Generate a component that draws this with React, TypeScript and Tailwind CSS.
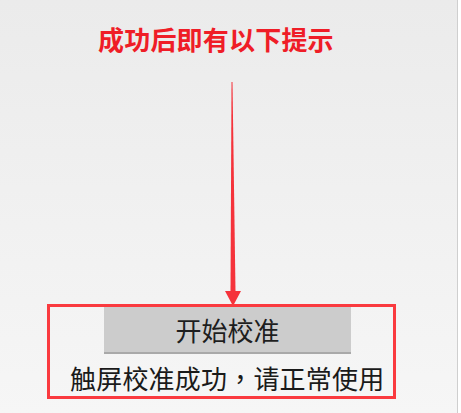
const CJK = "font-['Noto_Sans_CJK_SC','Noto_Sans',sans-serif]";

function DownArrow() {
  // red annotation arrow, tapering line + head
  return (
    <svg width="40" height="226" viewBox="0 0 40 226" className="block">
      <polygon points="11.5,2 12.5,2 15.5,212 10.5,212" fill="#f5333b" />
      <polygon points="5,211 21,211 13,226" fill="#f5333b" />
    </svg>
  );
}

export default function App() {
  return (
    <div className={`flex w-[461px] h-[413px] bg-white ${CJK}`}>
      <div className="flex flex-col w-[458px] h-full bg-gradient-to-b from-[#ebebeb] to-[#f6f6f6] border-r border-[#cfcfcf]">
        {/* Title */}
        <p className="mt-[25px] pl-[98px] text-[26px] leading-[28px] font-bold text-[#ef1d27] tracking-[0.2px]">
          成功后即有以下提示
        </p>

        {/* Arrow */}
        <div className="mt-[27px] pl-[220px]">
          <DownArrow />
        </div>

        {/* Result box */}
        <div className="-mt-[2px] ml-[47px] w-[349px] h-[95px] border-[3px] border-[#fa3a3f] flex flex-col">
          <div className="ml-[54px] w-[247px] h-[47px] bg-[#cccccc] border-b-2 border-[#a9a9a9] flex items-center justify-center text-[26px] leading-none text-[#1e1e1e]">
            开始校准
          </div>
          <p className="mt-[9px] pl-[20px] text-[26px] leading-[30px] text-[#1a1a1a] whitespace-nowrap tracking-[0.2px]">
            触屏校准成功<span className="font-['Noto_Sans_CJK_TC',sans-serif]">，</span>请正常使用
          </p>
        </div>
      </div>
    </div>
  );
}
